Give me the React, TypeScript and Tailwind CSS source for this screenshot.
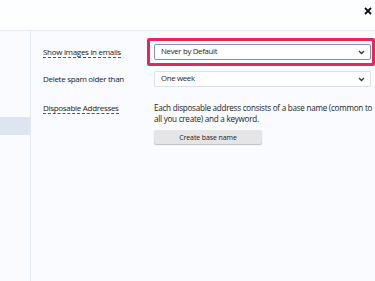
import React from "react";

function Chevron() {
  return (
    <svg width="7" height="5" viewBox="0 0 7 5" className="shrink-0">
      <path d="M1 1 L3.5 3.5 L6 1" fill="none" stroke="#333" strokeWidth="1.3" />
    </svg>
  );
}

function Select({ value, focused }: { value: string; focused?: boolean }) {
  return (
    <div
      className={`flex h-[16px] w-[217px] items-center justify-between rounded-[2px] border bg-white pl-[6px] pr-[5px] text-[7.8px] leading-none tracking-[-0.3px] text-[#1e1e1e] ${
        focused ? "border-[#8096b0]" : "border-[#dde2e8]"
      }`}
    >
      <span>{value}</span>
      <Chevron />
    </div>
  );
}

function Label({ children, dashed }: { children: React.ReactNode; dashed?: boolean }) {
  return (
    <div className="flex w-[104px] shrink-0 items-start">
      <span
        className={`inline-block text-[8px] leading-[10px] tracking-[-0.3px] text-[#222] ${dashed ? "border-b border-dashed border-[#555]" : ""}`}
      >
        {children}
      </span>
    </div>
  );
}

export default function App() {
  return (
    <div
      className="flex h-[281px] w-[375px] flex-col overflow-hidden bg-[#f9fbfe]"
      style={{ fontFamily: '"Open Sans", "Noto Sans", sans-serif' }}
    >
      <div className="flex h-[31px] shrink-0 items-start justify-end border-b border-[#e6ebf2] bg-[#fdfeff] pr-[1px] pt-[5px]">
        <svg width="12" height="12" viewBox="0 0 12 12">
          <path d="M3 3 L9 9 M9 3 L3 9" stroke="#111" strokeWidth="1.8" />
        </svg>
      </div>
      <div className="flex flex-1">
        <div className="w-[31px] shrink-0 border-r border-[#e3e9f1] pt-[86px]">
          <div className="h-[18px] bg-[#dde6f0]" />
        </div>
        <div className="flex flex-1 flex-col pl-[12px] pt-[7px]">
          <div className="flex h-[28px] items-center">
            <Label dashed>Show images in emails</Label>
            <div className="rounded-[2px] border-[3px] border-[#df2a5e] p-[3px] pl-[4px] pr-[1px]">
              <Select value="Never by Default" focused />
            </div>
          </div>
          <div className="mt-[5px] flex h-[16px] items-center">
            <Label>Delete spam older than</Label>
            <div className="pl-[7px]">
              <Select value="One week" />
            </div>
          </div>
          <div className="mt-[15px] flex items-start">
            <div className="pt-[1px]">
              <Label dashed>Disposable Addresses</Label>
            </div>
            <div className="flex flex-col items-start pl-[7px]">
              <p className="whitespace-nowrap text-[8.1px] leading-[11px] tracking-[-0.25px] text-[#222]">
                Each disposable address consists of a base name (common to
                <br />
                all you create) and a keyword.
              </p>
              <button className="mt-[6px] flex h-[14px] w-[108px] items-center justify-center rounded-[2px] bg-[#e5e5e7] text-[7px] leading-none tracking-[-0.1px] text-[#222] shadow-[0_1px_1px_rgba(0,0,0,0.25)]">
                Create base name
              </button>
            </div>
          </div>
        </div>
      </div>
    </div>
  );
}
